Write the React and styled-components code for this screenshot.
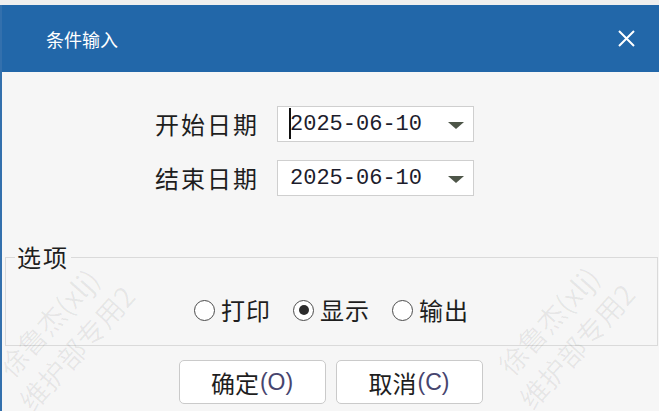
import React from 'react';
import styled, { createGlobalStyle } from 'styled-components';

const Global = createGlobalStyle`
  html, body {
    margin: 0;
    padding: 0;
    background: #efefef;
    overflow: hidden;
  }
  body {
    font-family: "Noto Sans CJK SC", "Noto Sans", sans-serif;
  }
`;

const S = {
  Page: styled.div`
    width: 659px;
    height: 411px;
    padding-top: 5px;
    box-sizing: border-box;
  `,
  Dialog: styled.div`
    position: relative;
    height: 406px;
    background: #f6f6f6;
    border-left: 2px solid #3370ad;
    overflow: hidden;
  `,
  TitleBar: styled.div`
    height: 67px;
    background: #2267a9;
    display: flex;
    align-items: center;
    justify-content: space-between;
    padding: 0 23px 0 44px;
    color: #fff;
    font-size: 18px;
  `,
  Close: styled.button`
    border: 0;
    background: none;
    padding: 0;
    width: 20px;
    height: 20px;
    display: flex;
    align-items: center;
    justify-content: center;
  `,
  Form: styled.div`
    display: grid;
    grid-template-columns: auto 197px;
    column-gap: 18px;
    row-gap: 18px;
    align-items: center;
    justify-content: start;
    padding: 34px 0 0 153px;
  `,
  Label: styled.label`
    font-size: 24px;
    letter-spacing: 2px;
    color: #1e1e1e;
    line-height: 36px;
  `,
  DateBox: styled.div`
    position: relative;
    height: 36px;
    box-sizing: border-box;
    background: #fff;
    border: 1px solid #cfcfcf;
    display: flex;
    align-items: center;
    justify-content: space-between;
    padding: 0 9px 0 12px;
    font-family: "Liberation Mono", monospace;
    font-size: 22px;
    color: #1c1c2c;
    &::before {
      content: '';
      display: ${p => (p.$focused ? 'block' : 'none')};
      position: absolute;
      left: 11px;
      top: 1px;
      width: 2px;
      height: 31px;
      background: #111;
    }
  `,
  Arrow: styled.span`
    width: 0;
    height: 0;
    border-left: 8px solid transparent;
    border-right: 8px solid transparent;
    border-top: 7px solid #4d5548;
    margin-top: 2px;
  `,
  Options: styled.fieldset`
    margin: 49px 1px 0 3px;
    padding: 27px 9px 21px;
    border: 1px solid #dadada;
    display: flex;
    justify-content: center;
    gap: 22px;
  `,
  Legend: styled.legend`
    padding: 0 2px;
    font-size: 24px;
    letter-spacing: 2px;
    line-height: 24px;
    color: #1e1e1e;
  `,
  Radio: styled.label`
    display: flex;
    align-items: center;
    gap: 6px;
    font-size: 24px;
    line-height: 28px;
    color: #1e1e1e;
    letter-spacing: 1px;
  `,
  Circle: styled.span`
    width: 21px;
    height: 21px;
    box-sizing: border-box;
    border: 1.5px solid #4b4b4b;
    border-radius: 50%;
    background: #fff;
    display: flex;
    align-items: center;
    justify-content: center;
    &::after {
      content: '';
      display: ${p => (p.$checked ? 'block' : 'none')};
      width: 10px;
      height: 10px;
      border-radius: 50%;
      background: #2b2b2b;
    }
  `,
  Buttons: styled.div`
    display: flex;
    justify-content: center;
    gap: 10px;
    margin-top: 14px;
  `,
  Button: styled.button`
    width: 147px;
    height: 44px;
    background: #fff;
    border: 1px solid #cacaca;
    border-radius: 5px;
    font-family: "Noto Sans CJK SC", sans-serif;
    font-size: 24px;
    color: #1e1e1e;
    display: flex;
    align-items: center;
    justify-content: center;
    padding: 0;
  `,
  Key: styled.span`
    font-family: "Liberation Sans", sans-serif;
    font-size: 23px;
    color: #47456e;
    margin-left: 1px;
  `,
  Watermark: styled.div`
    position: absolute;
    left: ${p => p.$x}px;
    top: ${p => p.$y}px;
    width: 200px;
    transform: rotate(-48deg);
    text-align: center;
    font-size: 28px;
    line-height: 38px;
    color: rgba(0, 0, 0, 0.065);
    pointer-events: none;
    white-space: nowrap;
  `,
};

const CloseIcon = () => (
  <svg width="19" height="19" viewBox="0 0 19 19">
    <path d="M2 2 L17 17 M17 2 L2 17" stroke="#fff" strokeWidth="2" fill="none" />
  </svg>
);

const App = () => {
  return (
    <S.Page>
      <Global />
      <S.Dialog>
        <S.TitleBar>
          <span>条件输入</span>
          <S.Close type="button"><CloseIcon /></S.Close>
        </S.TitleBar>
        <S.Form>
          <S.Label>开始日期</S.Label>
          <S.DateBox $focused>
            <span>2025-06-10</span>
            <S.Arrow />
          </S.DateBox>
          <S.Label>结束日期</S.Label>
          <S.DateBox>
            <span>2025-06-10</span>
            <S.Arrow />
          </S.DateBox>
        </S.Form>
        <S.Options>
          <S.Legend>选项</S.Legend>
          <S.Radio><S.Circle />打印</S.Radio>
          <S.Radio><S.Circle $checked />显示</S.Radio>
          <S.Radio><S.Circle />输出</S.Radio>
        </S.Options>
        <S.Buttons>
          <S.Button type="button">确定<S.Key>(O)</S.Key></S.Button>
          <S.Button type="button">取消<S.Key>(C)</S.Key></S.Button>
        </S.Buttons>
        <S.Watermark $x={-40} $y={292}>徐鲁杰(xlj)<br />维护部专用2</S.Watermark>
        <S.Watermark $x={460} $y={290}>徐鲁杰(xlj)<br />维护部专用2</S.Watermark>
      </S.Dialog>
    </S.Page>
  );
};

export default App;
